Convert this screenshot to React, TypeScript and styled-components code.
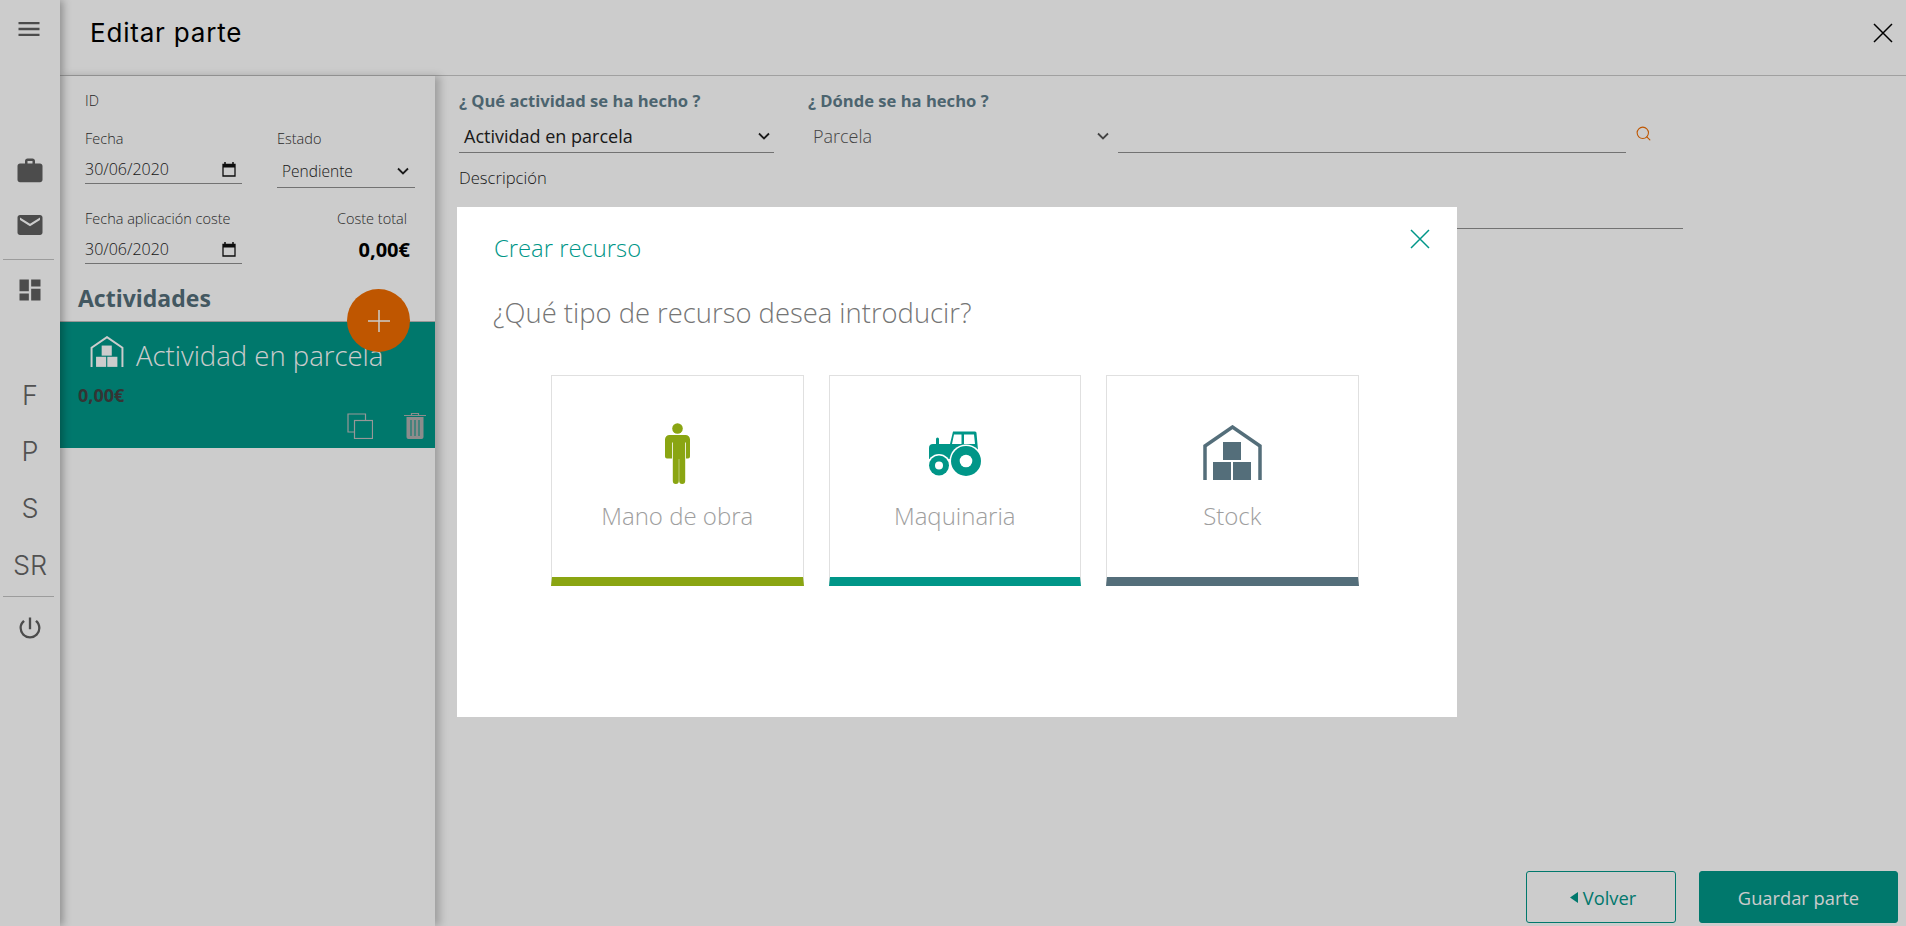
import React from "react";
import styled, { createGlobalStyle } from "styled-components";
import { MdDashboard, MdEmail, MdMenu, MdPowerSettingsNew, MdWork } from "react-icons/md";
import { Search } from "lucide-react";

const GlobalStyle = createGlobalStyle`
  html, body {
    margin: 0;
    padding: 0;
    background: #fff;
    font-family: "Open Sans", "Noto Sans", sans-serif;
  }
  * {
    box-sizing: border-box;
  }
`;

const Page = styled.div`
  position: relative;
  display: flex;
  width: 100%;
  height: 926px;
  overflow: hidden;
  background: #fff;
`;

const Sidebar = styled.nav`
  flex: 0 0 60px;
  display: flex;
  flex-direction: column;
  align-items: center;
  padding-top: 15px;
  background: #fff;
  color: #5f5f5f;
  box-shadow: 3px 0 8px rgba(0, 0, 0, 0.3);
  z-index: 3;
`;

const SideIcon = styled.div<{ $top: number; $left?: number }>`
  display: flex;
  justify-content: center;
  width: 60px;
  margin-top: ${(p) => p.$top}px;
  margin-left: ${(p) => p.$left ?? 0}px;
  line-height: 0;
`;

const SideLetter = styled.div<{ $top: number }>`
  width: 60px;
  height: 34px;
  margin-top: ${(p) => p.$top}px;
  font-family: Inter, sans-serif;
  font-size: 27px;
  font-weight: 300;
  line-height: 34px;
  text-align: center;
  color: #666;
`;

const SideRule = styled.hr<{ $top: number }>`
  width: 51px;
  height: 1px;
  margin: ${(p) => p.$top}px 0 0 -3px;
  border: 0;
  background: #c4c4c4;
  flex: none;
`;

const Main = styled.main`
  flex: 1;
  display: flex;
  flex-direction: column;
  min-width: 0;
`;

const Header = styled.header`
  flex: 0 0 76px;
  display: flex;
  align-items: center;
  justify-content: space-between;
  padding: 0 13px 10px 30px;
  border-bottom: 1px solid #c8c8c8;
`;

const PageTitle = styled.h1`
  margin: 0;
  font-family: Inter, sans-serif;
  font-size: 26px;
  font-weight: 400;
  letter-spacing: 0.8px;
  color: #000;
`;

const Body = styled.div`
  flex: 1;
  display: flex;
  min-height: 0;
`;

const Panel = styled.aside`
  flex: 0 0 375px;
  background: #fff;
  box-shadow: 5px 0 8px rgba(0, 0, 0, 0.22);
  z-index: 2;
`;

const PanelFields = styled.div`
  padding: 15px 20px 0 25px;
`;

const Label = styled.div`
  height: 20px;
  font-size: 14.5px;
  font-weight: 300;
  line-height: 20px;
  color: #333;
`;

const FieldRow = styled.div<{ $top: number }>`
  display: flex;
  justify-content: space-between;
  margin-top: ${(p) => p.$top}px;
`;

const FieldCol = styled.div<{ $width: number }>`
  width: ${(p) => p.$width}px;
  flex: none;
`;

const FieldValue = styled.div<{ $height: number; $indent?: number; $size: number }>`
  display: flex;
  align-items: center;
  justify-content: space-between;
  height: ${(p) => p.$height}px;
  margin-top: 1px;
  padding: 5px 6px 0 ${(p) => p.$indent ?? 0}px;
  border-bottom: 1px solid #8f8f8f;
  font-size: ${(p) => p.$size}px;
  font-weight: 300;
  color: #222;
`;

const Total = styled.div`
  width: 138px;
  padding-right: 8px;
  text-align: right;
`;

const TotalAmount = styled.div`
  height: 33px;
  margin: 4px -3px 0 0;
  font-size: 20px;
  font-weight: 700;
  line-height: 33px;
  color: #000;
`;

const SectionTitle = styled.h2`
  height: 34px;
  margin: 15px 0 6px 18px;
  font-size: 23px;
  font-weight: 700;
  line-height: 34px;
  color: #546e7a;
`;

const Activity = styled.div`
  position: relative;
  height: 127px;
  padding: 14px 9px 0 18px;
  background: #009688;
  border-top: 1px solid #bdbdbd;
`;

const ActivityHead = styled.div`
  display: flex;
  align-items: flex-start;
  gap: 12px;
  padding-left: 12px;
`;

const ActivityName = styled.span`
  margin-top: 4px;
  font-size: 27.5px;
  font-weight: 300;
  line-height: 32px;
  color: #fff;
`;

const ActivityCost = styled.div`
  margin-top: 11px;
  font-size: 18px;
  font-weight: 700;
  line-height: 24px;
  color: #424242;
`;

const ActivityActions = styled.div`
  display: flex;
  justify-content: flex-end;
  align-items: flex-end;
  gap: 31px;
  margin-top: 5px;
`;

const Fab = styled.div`
  position: absolute;
  top: -33px;
  left: 287px;
  display: flex;
  align-items: center;
  justify-content: center;
  width: 63px;
  height: 63px;
  border-radius: 50%;
  background: #ef6c00;
`;

const Editor = styled.section`
  flex: 1;
  padding: 14px 0 0 24px;
  min-width: 0;
`;

const EditorRow = styled.div`
  display: flex;
`;

const Question = styled.div`
  height: 22px;
  font-size: 16.6px;
  font-weight: 700;
  line-height: 22px;
  color: #607d8b;
`;

const SelectBox = styled.div<{ $width: number; $muted?: boolean }>`
  display: flex;
  align-items: center;
  justify-content: space-between;
  width: ${(p) => p.$width}px;
  height: 41px;
  padding: 8px 4px 0 5px;
  border-bottom: ${(p) => (p.$muted ? "1px solid transparent" : "1px solid #8f8f8f")};
  font-size: 18px;
  font-weight: ${(p) => (p.$muted ? 300 : 400)};
  color: ${(p) => (p.$muted ? "#555" : "#222")};
`;

const WhereField = styled.div`
  display: flex;
  margin-left: 34px;
`;

const PlaceInput = styled.div`
  width: 508px;
  height: 41px;
  margin: 22px 0 0 5px;
  border-bottom: 1px solid #8f8f8f;
`;

const SearchSlot = styled.div`
  padding: 35px 0 0 9px;
  line-height: 0;
  color: #ef6c00;
`;

const DescriptionBlock = styled.div`
  width: 1224px;
  height: 61px;
  margin-top: 15px;
  border-bottom: 1px solid #8f8f8f;
`;

const DescriptionLabel = styled(Label)`
  font-size: 16.6px;
  color: #222;
`;

const Footer = styled.footer`
  position: absolute;
  right: 8px;
  bottom: 3px;
  display: flex;
  gap: 23px;
`;

const FooterButton = styled.button<{ $primary?: boolean }>`
  display: flex;
  align-items: center;
  justify-content: center;
  gap: 5px;
  width: ${(p) => (p.$primary ? 199 : 150)}px;
  height: 52px;
  padding: 0 0 0 ${(p) => (p.$primary ? 0 : 4)}px;
  border: 1px solid #009688;
  border-radius: 3px;
  background: ${(p) => (p.$primary ? "#009688" : "#fff")};
  font-family: inherit;
  font-size: 18.3px;
  color: ${(p) => (p.$primary ? "#fff" : "#009688")};
`;

const Overlay = styled.div`
  position: absolute;
  inset: 0;
  padding: 207px 0 0 457px;
  background: rgba(0, 0, 0, 0.2);
  z-index: 10;
`;

const Modal = styled.div`
  position: relative;
  width: 1000px;
  height: 510px;
  padding: 26px 34px 0 37px;
  background: #fff;
`;

const ModalTitle = styled.h3`
  margin: 0;
  font-size: 23.8px;
  font-weight: 300;
  line-height: 30px;
  color: #009688;
`;

const ModalClose = styled.div`
  position: absolute;
  top: 22px;
  right: 27px;
  line-height: 0;
`;

const ModalQuestion = styled.p`
  margin: 31px 0 0 -1px;
  font-size: 27.4px;
  font-weight: 300;
  line-height: 38px;
  color: #757575;
`;

const CardRow = styled.div`
  display: flex;
  gap: 25px;
  margin: 43px 0 0 57px;
`;

const Card = styled.div<{ $bar: string }>`
  display: flex;
  flex-direction: column;
  align-items: center;
  width: 252.5px;
  height: 211px;
  border: 1px solid #e0e0e0;
  border-bottom: 9px solid ${(p) => p.$bar};
  background: #fff;
`;

const CardIcon = styled.div<{ $lift?: number }>`
  display: flex;
  align-items: flex-end;
  justify-content: center;
  height: 108px;
  padding-bottom: ${(p) => p.$lift ?? 0}px;
  line-height: 0;
`;

const CardLabel = styled.div`
  margin-top: 15px;
  font-size: 24px;
  font-weight: 300;
  line-height: 34px;
  color: #9e9e9e;
`;

const Warehouse = ({ color, width, height }: { color: string; width: number; height: number }) => (
  <svg width={width} height={height} viewBox="0 0 59 57">
    <path d="M2 55V21L29.5 2 57 21v34" fill="none" stroke={color} strokeWidth="3.5" />
    <rect x="20" y="17" width="18" height="18" fill={color} />
    <rect x="10" y="37" width="18" height="18" fill={color} />
    <rect x="30" y="37" width="18" height="18" fill={color} />
  </svg>
);

const Person = () => (
  <svg width="25" height="61" viewBox="0 0 25 61">
    <g fill="#8aa512">
      <circle cx="12.5" cy="5.5" r="5.3" />
      <path d="M4.5 12h16a4.5 4.5 0 0 1 4.5 4.5v17a2 2 0 0 1-2 2h-2v-16h-.8V58a3 3 0 0 1-6 0V36h-.4v22a3 3 0 0 1-6 0V19.500h-.8v16H2a2 2 0 0 1-2-2v-17A4.500 4.500 0 0 1 4.500 12z" />
    </g>
  </svg>
);

const Tractor = () => (
  <svg width="52" height="45" viewBox="0 0 52 45">
    <path
      d="M7 13V8a1.500 1.500 0 0 1 3 0v5h11l3-12.500h22a1.500 1.500 0 0 1 1.500 1.500L49 19H33a14 14 0 0 0-11 9H0V17a4 4 0 0 1 4-4z"
      fill="#009688"
    />
    <path d="M25 3.500h7.500V13H23z M35 3.500h10L46 13H35z" fill="#fff" />
    <circle cx="37" cy="30" r="16.500" fill="#fff" />
    <circle cx="37" cy="30" r="15" fill="#009688" />
    <circle cx="37" cy="30" r="6.300" fill="#fff" />
    <circle cx="10" cy="34.500" r="11.500" fill="#fff" />
    <circle cx="10" cy="34.500" r="10" fill="#009688" />
    <circle cx="10" cy="34.500" r="4" fill="#fff" />
  </svg>
);

const Calendar = () => (
  <svg width="14" height="15" viewBox="0 0 14 15">
    <path d="M3 0v2M11 0v2" stroke="#111" strokeWidth="1.500" />
    <path d="M1 2.500h12v11.500H1z" fill="none" stroke="#111" strokeWidth="1.300" />
    <path d="M1 2h12v3.500H1z" fill="#111" />
  </svg>
);

const Chevron = ({ color }: { color: string }) => (
  <svg width="12" height="8" viewBox="0 0 12 8">
    <path d="M1 1.500l5 5 5-5" fill="none" stroke={color} strokeWidth="1.800" />
  </svg>
);

const Cross = ({ size, color, weight }: { size: number; color: string; weight: number }) => (
  <svg width={size} height={size} viewBox="0 0 20 20">
    <path d="M1 1l18 18M19 1L1 19" stroke={color} strokeWidth={weight} fill="none" />
  </svg>
);

const CopyIcon = () => (
  <svg width="26" height="26" viewBox="0 0 26 26" fill="none" stroke="#bdbdbd" strokeWidth="1.200">
    <path d="M7 19H1V1h17.500v6" />
    <rect x="7.500" y="7.500" width="18" height="18" />
  </svg>
);

const TrashIcon = () => (
  <svg width="22" height="27" viewBox="0 0 22 27">
    <path d="M7.500 3V1.500h7V3M0 3.500h22" fill="none" stroke="#b0b0b0" strokeWidth="1.200" />
    <path d="M2.500 5h17v20a2 2 0 0 1-2 2h-13a2 2 0 0 1-2-2z" fill="#b0b0b0" />
    <path d="M7 8v16M11 8v16M15 8v16" stroke="#009688" strokeWidth="1" />
  </svg>
);

const Plus = () => (
  <svg width="22" height="22" viewBox="0 0 22 22">
    <path d="M11 0v22M0 11h22" stroke="#fff" strokeWidth="1.500" />
  </svg>
);

const BackArrow = () => (
  <svg width="8" height="11" viewBox="0 0 8 11">
    <path d="M8 0v11L0 5.500z" fill="#009688" />
  </svg>
);

const DateField = ({ label }: { label: string }) => (
  <FieldCol $width={157}>
    <Label>{label}</Label>
    <FieldValue $height={34} $size={16}>
      30/06/2020
      <Calendar />
    </FieldValue>
  </FieldCol>
);

export default function App() {
  return (
    <Page>
      <GlobalStyle />
      <Sidebar>
        <SideIcon $top={0} $left={-2}>
          <MdMenu size={28} />
        </SideIcon>
        <SideIcon $top={113}>
          <MdWork size={30} />
        </SideIcon>
        <SideIcon $top={24}>
          <MdEmail size={30} />
        </SideIcon>
        <SideRule $top={19} />
        <SideIcon $top={16}>
          <MdDashboard size={28} />
        </SideIcon>
        <SideLetter $top={75}>F</SideLetter>
        <SideLetter $top={22}>P</SideLetter>
        <SideLetter $top={23}>S</SideLetter>
        <SideLetter $top={23}>SR</SideLetter>
        <SideRule $top={13} />
        <SideIcon $top={17}>
          <MdPowerSettingsNew size={28} />
        </SideIcon>
      </Sidebar>
      <Main>
        <Header>
          <PageTitle>Editar parte</PageTitle>
          <Cross size={20} color="#000" weight={1.5} />
        </Header>
        <Body>
          <Panel>
            <PanelFields>
              <Label>ID</Label>
              <FieldRow $top={18}>
                <DateField label="Fecha" />
                <FieldCol $width={138}>
                  <Label>Estado</Label>
                  <FieldValue $height={38} $indent={5} $size={15.5}>
                    Pendiente
                    <Chevron color="#222" />
                  </FieldValue>
                </FieldCol>
              </FieldRow>
              <FieldRow $top={21}>
                <DateField label="Fecha aplicación coste" />
                <Total>
                  <Label>Coste total</Label>
                  <TotalAmount>0,00€</TotalAmount>
                </Total>
              </FieldRow>
            </PanelFields>
            <SectionTitle>Actividades</SectionTitle>
            <Activity>
              <ActivityHead>
                <Warehouse color="#fff" width={34} height={32} />
                <ActivityName>Actividad en parcela</ActivityName>
              </ActivityHead>
              <ActivityCost>0,00€</ActivityCost>
              <ActivityActions>
                <CopyIcon />
                <TrashIcon />
              </ActivityActions>
              <Fab>
                <Plus />
              </Fab>
            </Activity>
          </Panel>
          <Editor>
            <EditorRow>
              <div>
                <Question>¿ Qué actividad se ha hecho ?</Question>
                <SelectBox $width={315}>
                  Actividad en parcela
                  <Chevron color="#222" />
                </SelectBox>
              </div>
              <WhereField>
                <div>
                  <Question>¿ Dónde se ha hecho ?</Question>
                  <SelectBox $width={305} $muted>
                    Parcela
                    <Chevron color="#555" />
                  </SelectBox>
                </div>
                <PlaceInput />
                <SearchSlot>
                  <Search size={17} strokeWidth={1.5} />
                </SearchSlot>
              </WhereField>
            </EditorRow>
            <DescriptionBlock>
              <DescriptionLabel>Descripción</DescriptionLabel>
            </DescriptionBlock>
          </Editor>
        </Body>
        <Footer>
          <FooterButton>
            <BackArrow />
            Volver
          </FooterButton>
          <FooterButton $primary>Guardar parte</FooterButton>
        </Footer>
      </Main>
      <Overlay>
        <Modal>
          <ModalClose>
            <Cross size={20} color="#009688" weight={1.5} />
          </ModalClose>
          <ModalTitle>Crear recurso</ModalTitle>
          <ModalQuestion>¿Qué tipo de recurso desea introducir?</ModalQuestion>
          <CardRow>
            <Card $bar="#8aa512">
              <CardIcon>
                <Person />
              </CardIcon>
              <CardLabel>Mano de obra</CardLabel>
            </Card>
            <Card $bar="#009688">
              <CardIcon $lift={8}>
                <Tractor />
              </CardIcon>
              <CardLabel>Maquinaria</CardLabel>
            </Card>
            <Card $bar="#546e7a">
              <CardIcon $lift={2}>
                <Warehouse color="#546e7a" width={59} height={57} />
              </CardIcon>
              <CardLabel>Stock</CardLabel>
            </Card>
          </CardRow>
        </Modal>
      </Overlay>
    </Page>
  );
}
